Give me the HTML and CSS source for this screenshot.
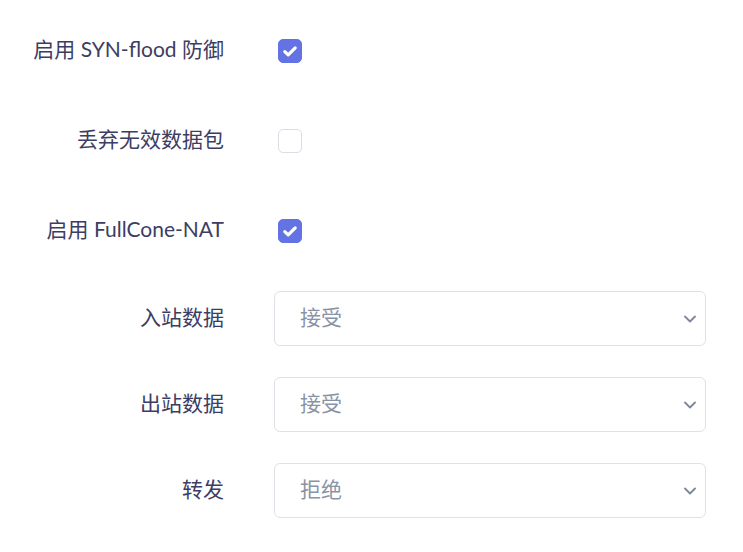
FILE: index.html
```html
<!DOCTYPE html>
<html lang="zh-CN">
<head>
<meta charset="utf-8">
<link rel="stylesheet" href="styles.css">
</head>
<body>
<form class="form">
  <div class="row row-check">
    <label class="label">启用 SYN-flood 防御</label>
    <div class="control">
      <span class="checkbox checked">
        <svg viewBox="0 0 24 24" width="24" height="24"><path d="M6.8 12.6l3.4 3.3 7-7" fill="none" stroke="#fff" stroke-width="3.2" stroke-linecap="round" stroke-linejoin="round"/></svg>
      </span>
    </div>
  </div>
  <div class="row row-check">
    <label class="label">丢弃无效数据包</label>
    <div class="control">
      <span class="checkbox"></span>
    </div>
  </div>
  <div class="row row-check">
    <label class="label">启用 FullCone-NAT</label>
    <div class="control">
      <span class="checkbox checked">
        <svg viewBox="0 0 24 24" width="24" height="24"><path d="M6.8 12.6l3.4 3.3 7-7" fill="none" stroke="#fff" stroke-width="3.2" stroke-linecap="round" stroke-linejoin="round"/></svg>
      </span>
    </div>
  </div>
  <div class="row row-select">
    <label class="label">入站数据</label>
    <div class="control">
      <div class="select"><span class="value">接受</span>
        <svg class="chev" viewBox="0 0 12 8" width="12" height="8"><path d="M1 1.5l5 5 5-5" fill="none" stroke="#7b8699" stroke-width="1.8" stroke-linecap="round" stroke-linejoin="round"/></svg>
      </div>
    </div>
  </div>
  <div class="row row-select">
    <label class="label">出站数据</label>
    <div class="control">
      <div class="select"><span class="value">接受</span>
        <svg class="chev" viewBox="0 0 12 8" width="12" height="8"><path d="M1 1.5l5 5 5-5" fill="none" stroke="#7b8699" stroke-width="1.8" stroke-linecap="round" stroke-linejoin="round"/></svg>
      </div>
    </div>
  </div>
  <div class="row row-select">
    <label class="label">转发</label>
    <div class="control">
      <div class="select"><span class="value">拒绝</span>
        <svg class="chev" viewBox="0 0 12 8" width="12" height="8"><path d="M1 1.5l5 5 5-5" fill="none" stroke="#7b8699" stroke-width="1.8" stroke-linecap="round" stroke-linejoin="round"/></svg>
      </div>
    </div>
  </div>
</form>
</body>
</html>
```

FILE: styles.css
```css
html, body {
  margin: 0;
  padding: 0;
  background: #ffffff;
}
body {
  font-family: "Lato", "Noto Sans CJK SC", sans-serif;
  color: #3d3d63;
}
.form {
  display: flex;
  flex-direction: column;
  gap: 31px;
  padding-top: 21px;
  width: 706px;
}
.row {
  display: flex;
  align-items: center;
}
.row-check { height: 59px; }
.row-select { height: 55px; }
.label {
  width: 224px;
  text-align: right;
  font-size: 21px;
  line-height: 24px;
  padding-right: 50px;
  padding-bottom: 4px;
  box-sizing: content-box;
  font-weight: 400;
}
.control {
  flex: 1;
  display: flex;
  align-items: center;
}
.checkbox {
  box-sizing: border-box;
  width: 24px;
  height: 24px;
  margin-left: 4px;
  border-radius: 5px;
  border: 1px solid #dcdde4;
  background: #fff;
  display: flex;
  align-items: center;
  justify-content: center;
}
.checkbox.checked {
  background: #6373e3;
  border-color: #6373e3;
}
.checkbox svg { display: block; flex: none; }
.select {
  box-sizing: border-box;
  flex: 1;
  height: 55px;
  border: 1px solid #dfe1e7;
  border-radius: 6px;
  display: flex;
  align-items: center;
  justify-content: space-between;
  padding: 0 9px 0 25px;
}
.value {
  font-size: 21px;
  line-height: 24px;
  padding-bottom: 3px;
  color: #8893a6;
}
.chev { display: block; }
```
